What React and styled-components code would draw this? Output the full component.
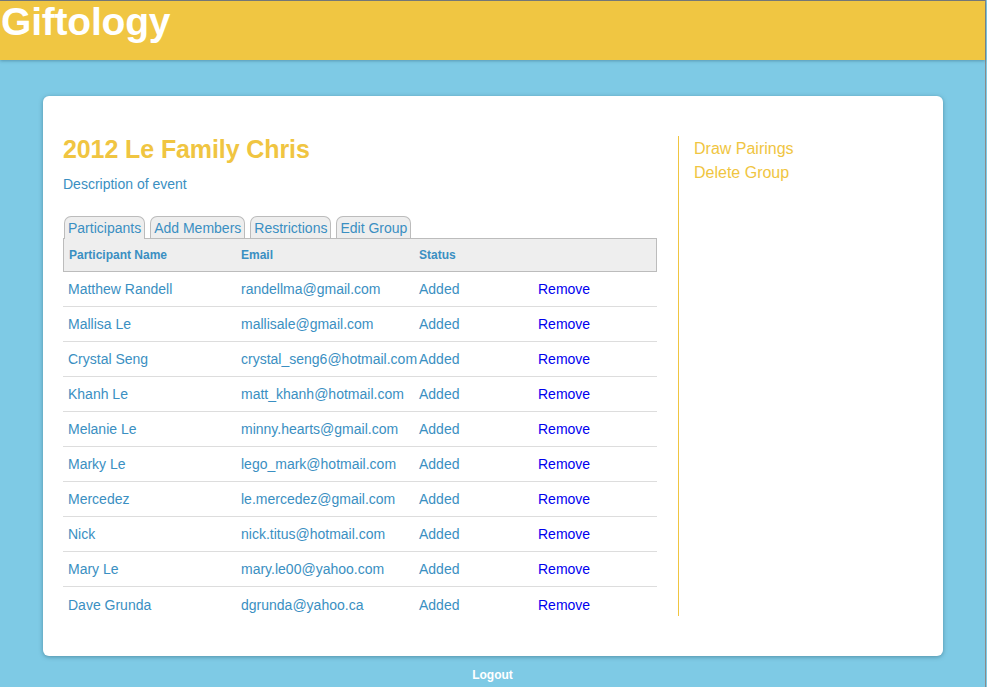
import styled, { createGlobalStyle } from 'styled-components';

const GlobalStyle = createGlobalStyle`
  html, body {
    margin: 0;
    padding: 0;
    background: #7ecae5;
    font-family: "Liberation Sans", Arial, Helvetica, sans-serif;
  }
`;

const Page = styled.div`
  min-height: 686px;
  border-top: 1px solid #7a7a7a;
  border-right: 1px solid #8a8a8a;
  width: 985px;
`;

const Header = styled.header`
  height: 59px;
  background: #f0c642;
  box-shadow: 0 1px 3px rgba(40, 90, 110, 0.45);
`;

const Logo = styled.h1`
  margin: 0;
  padding: 0 0 0 1px;
  color: #fff;
  font-size: 39px;
  font-weight: bold;
  line-height: 41px;
  letter-spacing: -0.2px;
`;

const Card = styled.div`
  width: 900px;
  margin: 36px 0 0 43px;
  box-sizing: border-box;
  background: #fff;
  border-radius: 6px;
  box-shadow: 0 1px 4px rgba(40, 90, 110, 0.5);
  padding: 40px 20px 34px 20px;
  display: flex;
  align-items: flex-start;
`;

const Main = styled.div`
  width: 594px;
`;

const Title = styled.h2`
  margin: 0;
  color: #f0c541;
  font-size: 25px;
  font-weight: bold;
  line-height: 27px;
  letter-spacing: -0.1px;
`;

const Description = styled.p`
  margin: 12px 0 0 0;
  color: #3a8fc2;
  font-size: 14px;
  line-height: 18px;
`;

const Tabs = styled.div`
  display: flex;
  gap: 5px;
  margin-top: 23px;
  padding-left: 1px;
`;

const Tab = styled.div`
  padding: 0 3px;
  border: 1px solid #bcbcbc;
  border-bottom: none;
  border-radius: 7px 7px 0 0;
  background: #eeeeee;
  color: #3a8fc2;
  font-size: 14px;
  line-height: 22px;
  margin-bottom: -1px;
  position: relative;
  z-index: ${p => (p.$active ? 1 : 0)};
  height: ${p => (p.$active ? '22px' : '21px')};
`;

const Table = styled.div`
  display: flex;
  flex-direction: column;
`;

const HeadRow = styled.div`
  display: grid;
  grid-template-columns: 172px 178px 119px 1fr;
  height: 32px;
  align-items: center;
  background: #eeeeee;
  border: 1px solid #bcbcbc;
  padding-left: 5px;
`;

const HeadCell = styled.div`
  color: #3a8fc2;
  font-size: 12px;
  font-weight: bold;
`;

const Row = styled.div`
  display: grid;
  grid-template-columns: 173px 178px 119px 1fr;
  height: 35px;
  align-items: center;
  padding-left: 5px;
  border-bottom: 1px solid #dddddd;
  box-sizing: border-box;
  &:last-child {
    border-bottom: none;
  }
`;

const Cell = styled.div`
  color: ${p => (p.$link ? '#0000ee' : '#3a8fc2')};
  font-size: 14px;
  white-space: nowrap;
  cursor: ${p => (p.$link ? 'pointer' : 'default')};
`;

const Sidebar = styled.div`
  margin-left: 21px;
  height: 480px;
  box-sizing: border-box;
  border-left: 1px solid #f0c541;
  padding: 3px 0 0 15px;
  display: flex;
  flex-direction: column;
  gap: 4px;
`;

const SideLink = styled.a`
  color: #f0c541;
  font-size: 16px;
  line-height: 20px;
  text-decoration: none;
  cursor: pointer;
`;

const Footer = styled.div`
  text-align: center;
  padding: 12px 0 0 0;
  color: #fff;
  font-size: 12px;
  font-weight: bold;
`;

const people = [
  ['Matthew Randell', 'randellma@gmail.com'],
  ['Mallisa Le', 'mallisale@gmail.com'],
  ['Crystal Seng', 'crystal_seng6@hotmail.com'],
  ['Khanh Le', 'matt_khanh@hotmail.com'],
  ['Melanie Le', 'minny.hearts@gmail.com'],
  ['Marky Le', 'lego_mark@hotmail.com'],
  ['Mercedez', 'le.mercedez@gmail.com'],
  ['Nick', 'nick.titus@hotmail.com'],
  ['Mary Le', 'mary.le00@yahoo.com'],
  ['Dave Grunda', 'dgrunda@yahoo.ca'],
];

const App = () => (
  <>
    <GlobalStyle />
    <Page>
      <Header>
        <Logo>Giftology</Logo>
      </Header>
      <Card>
        <Main>
          <Title>2012 Le Family Chris</Title>
          <Description>Description of event</Description>
          <Tabs>
            <Tab $active>Participants</Tab>
            <Tab>Add Members</Tab>
            <Tab>Restrictions</Tab>
            <Tab>Edit Group</Tab>
          </Tabs>
          <Table>
            <HeadRow>
              <HeadCell>Participant Name</HeadCell>
              <HeadCell>Email</HeadCell>
              <HeadCell>Status</HeadCell>
              <HeadCell />
            </HeadRow>
            {people.map(([name, email]) => (
              <Row key={email}>
                <Cell>{name}</Cell>
                <Cell>{email}</Cell>
                <Cell>Added</Cell>
                <Cell $link>Remove</Cell>
              </Row>
            ))}
          </Table>
        </Main>
        <Sidebar>
          <SideLink>Draw Pairings</SideLink>
          <SideLink>Delete Group</SideLink>
        </Sidebar>
      </Card>
      <Footer>Logout</Footer>
    </Page>
  </>
);

export default App;
